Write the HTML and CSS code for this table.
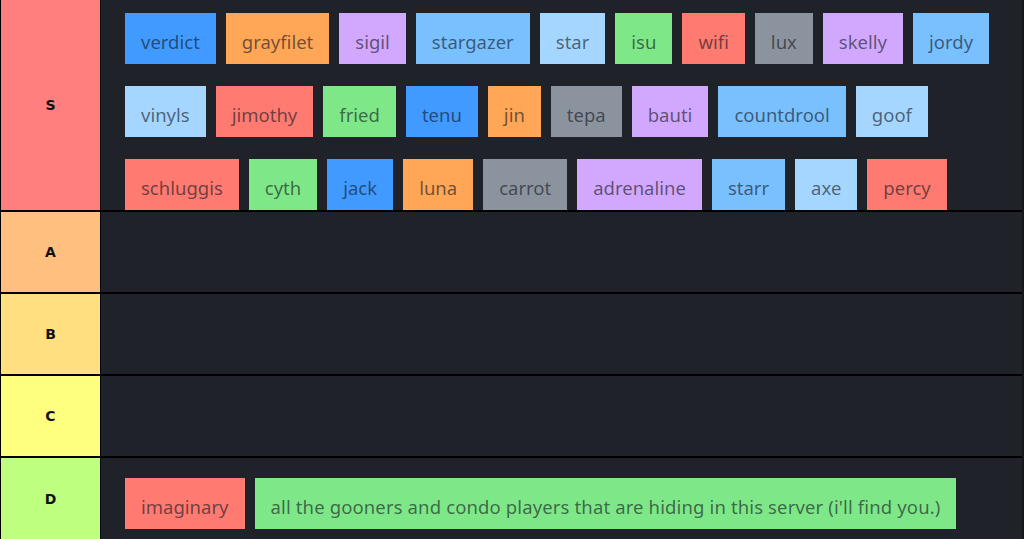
FILE: index.html
```html
<!DOCTYPE html>
<html>
<head>
<meta charset="utf-8">
<link rel="stylesheet" href="styles.css">
</head>
<body>
<div class="board">
  <div class="tier tier-s">
    <div class="label">S</div>
    <div class="items">
      <span class="tile blue">verdict</span>
      <span class="tile orange">grayfilet</span>
      <span class="tile purple">sigil</span>
      <span class="tile sky">stargazer</span>
      <span class="tile pale">star</span>
      <span class="tile green">isu</span>
      <span class="tile red">wifi</span>
      <span class="tile gray">lux</span>
      <span class="tile purple">skelly</span>
      <span class="tile sky">jordy</span>
      <span class="tile pale">vinyls</span>
      <span class="tile red">jimothy</span>
      <span class="tile green">fried</span>
      <span class="tile blue">tenu</span>
      <span class="tile orange">jin</span>
      <span class="tile gray">tepa</span>
      <span class="tile purple">bauti</span>
      <span class="tile sky">countdrool</span>
      <span class="tile pale">goof</span>
      <span class="tile red">schluggis</span>
      <span class="tile green">cyth</span>
      <span class="tile blue">jack</span>
      <span class="tile orange">luna</span>
      <span class="tile gray">carrot</span>
      <span class="tile purple">adrenaline</span>
      <span class="tile sky">starr</span>
      <span class="tile pale">axe</span>
      <span class="tile red">percy</span>
    </div>
  </div>
  <div class="tier tier-a">
    <div class="label">A</div>
    <div class="items"></div>
  </div>
  <div class="tier tier-b">
    <div class="label">B</div>
    <div class="items"></div>
  </div>
  <div class="tier tier-c">
    <div class="label">C</div>
    <div class="items"></div>
  </div>
  <div class="tier tier-d">
    <div class="label">D</div>
    <div class="items">
      <span class="tile red">imaginary</span>
      <span class="tile green wide">all the gooners and condo players that are hiding in this server (i'll find you.)</span>
    </div>
  </div>
</div>
</body>
</html>
```

FILE: styles.css
```css
html, body {
  margin: 0;
  padding: 0;
  background: #111;
  overflow: hidden;
}
.board {
  width: 1024px;
  height: 539px;
  box-sizing: border-box;
  border-left: 1px solid #000;
  border-right: 2px solid #16171b;
  display: flex;
  flex-direction: column;
  background: #000;
  gap: 2px;
}
.tier {
  display: flex;
  min-height: 80px;
}
.label {
  width: 99px;
  flex: none;
  display: flex;
  align-items: center;
  justify-content: center;
  border-right: 1px solid #000;
  font-family: "DejaVu Sans", Verdana, sans-serif;
  font-weight: bold;
  font-size: 14px;
  color: #111;
}
.items {
  flex: 1;
  background: #202229;
  display: flex;
  flex-wrap: wrap;
  align-content: flex-start;
  column-gap: 10px;
  row-gap: 22px;
  padding: 0 8px 0 24px;
}
.tier-s { height: 210px; }
.tier-s .items { padding-top: 13px; }
.tier-s .label { background: #ff7f7f; }
.tier-a .label { background: #ffbf7f; }
.tier-b .label { background: #ffdf80; }
.tier-c .label { background: #ffff7f; }
.tier-d { flex: 1; }
.tier-d .label { background: #bfff7f; }
.tier-d .items { padding-top: 20px; }
.tile {
  height: 51px;
  display: flex;
  align-items: center;
  padding: 5px 16px 0;
  font-family: "Noto Sans", "Open Sans", sans-serif;
  font-size: 18.5px;
  color: rgba(18, 22, 30, 0.62);
  white-space: nowrap;
  box-sizing: border-box;
}
.tile.wide { letter-spacing: 0.13px; }
.blue { background: #409aff; }
.orange { background: #ffa657; }
.purple { background: #d2a8ff; }
.sky { background: #79c0ff; }
.pale { background: #a5d6ff; }
.green { background: #7ee787; }
.red { background: #ff7b72; }
.gray { background: #8b949e; }
```
